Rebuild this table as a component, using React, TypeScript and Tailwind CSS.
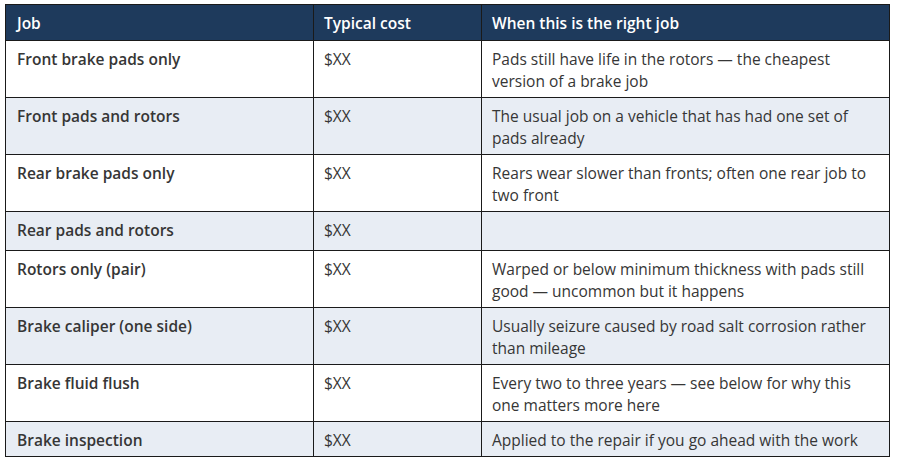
const rows = [
  { job: "Front brake pads only", cost: "$XX", when: "Pads still have life in the rotors — the cheapest version of a brake job", h: "h-[57px]" },
  { job: "Front pads and rotors", cost: "$XX", when: "The usual job on a vehicle that has had one set of pads already", h: "h-[57px]" },
  { job: "Rear brake pads only", cost: "$XX", when: "Rears wear slower than fronts; often one rear job to two front", h: "h-[57px]" },
  { job: "Rear pads and rotors", cost: "$XX", when: "", h: "h-[39px]" },
  { job: "Rotors only (pair)", cost: "$XX", when: "Warped or below minimum thickness with pads still good — uncommon but it happens", h: "h-[57px]" },
  { job: "Brake caliper (one side)", cost: "$XX", when: "Usually seizure caused by road salt corrosion rather than mileage", h: "h-[57px]" },
  { job: "Brake fluid flush", cost: "$XX", when: "Every two to three years — see below for why this one matters more here", h: "h-[57px]" },
  { job: "Brake inspection", cost: "$XX", when: "Applied to the repair if you go ahead with the work", h: "h-[35px]" },
];

export default function App() {
  return (
    <div className="min-h-screen bg-white pl-[5px] pt-[4px] font-['Open_Sans','Noto_Sans',sans-serif] text-[15.5px] leading-[22px] text-[#363636]">
      <table className="w-[884px] table-fixed border-collapse border border-[#1a1a1a]">
        <colgroup>
          <col className="w-[308px]" />
          <col className="w-[168px]" />
          <col className="w-[408px]" />
        </colgroup>
        <thead>
          <tr className="h-[36px] bg-[#1e3a5c] text-white">
            <th className="border border-[#1a1a1a] px-[11px] text-left align-middle font-semibold">Job</th>
            <th className="border border-[#1a1a1a] px-[10px] text-left align-middle font-semibold">Typical cost</th>
            <th className="border border-[#1a1a1a] pl-[10px] pr-[12px] text-left align-middle font-semibold">When this is the right job</th>
          </tr>
        </thead>
        <tbody>
          {rows.map((r, i) => (
            <tr key={r.job} className={`${r.h} ${i % 2 === 1 ? "bg-[#e8edf4]" : "bg-white"}`}>
              <td className="border border-[#1a1a1a] px-[11px] pt-[7px] align-top font-semibold">{r.job}</td>
              <td className="border border-[#1a1a1a] px-[10px] pt-[7px] align-top">{r.cost}</td>
              <td className="border border-[#1a1a1a] pl-[10px] pr-[12px] pt-[7px] align-top">{r.when}</td>
            </tr>
          ))}
        </tbody>
      </table>
    </div>
  );
}
